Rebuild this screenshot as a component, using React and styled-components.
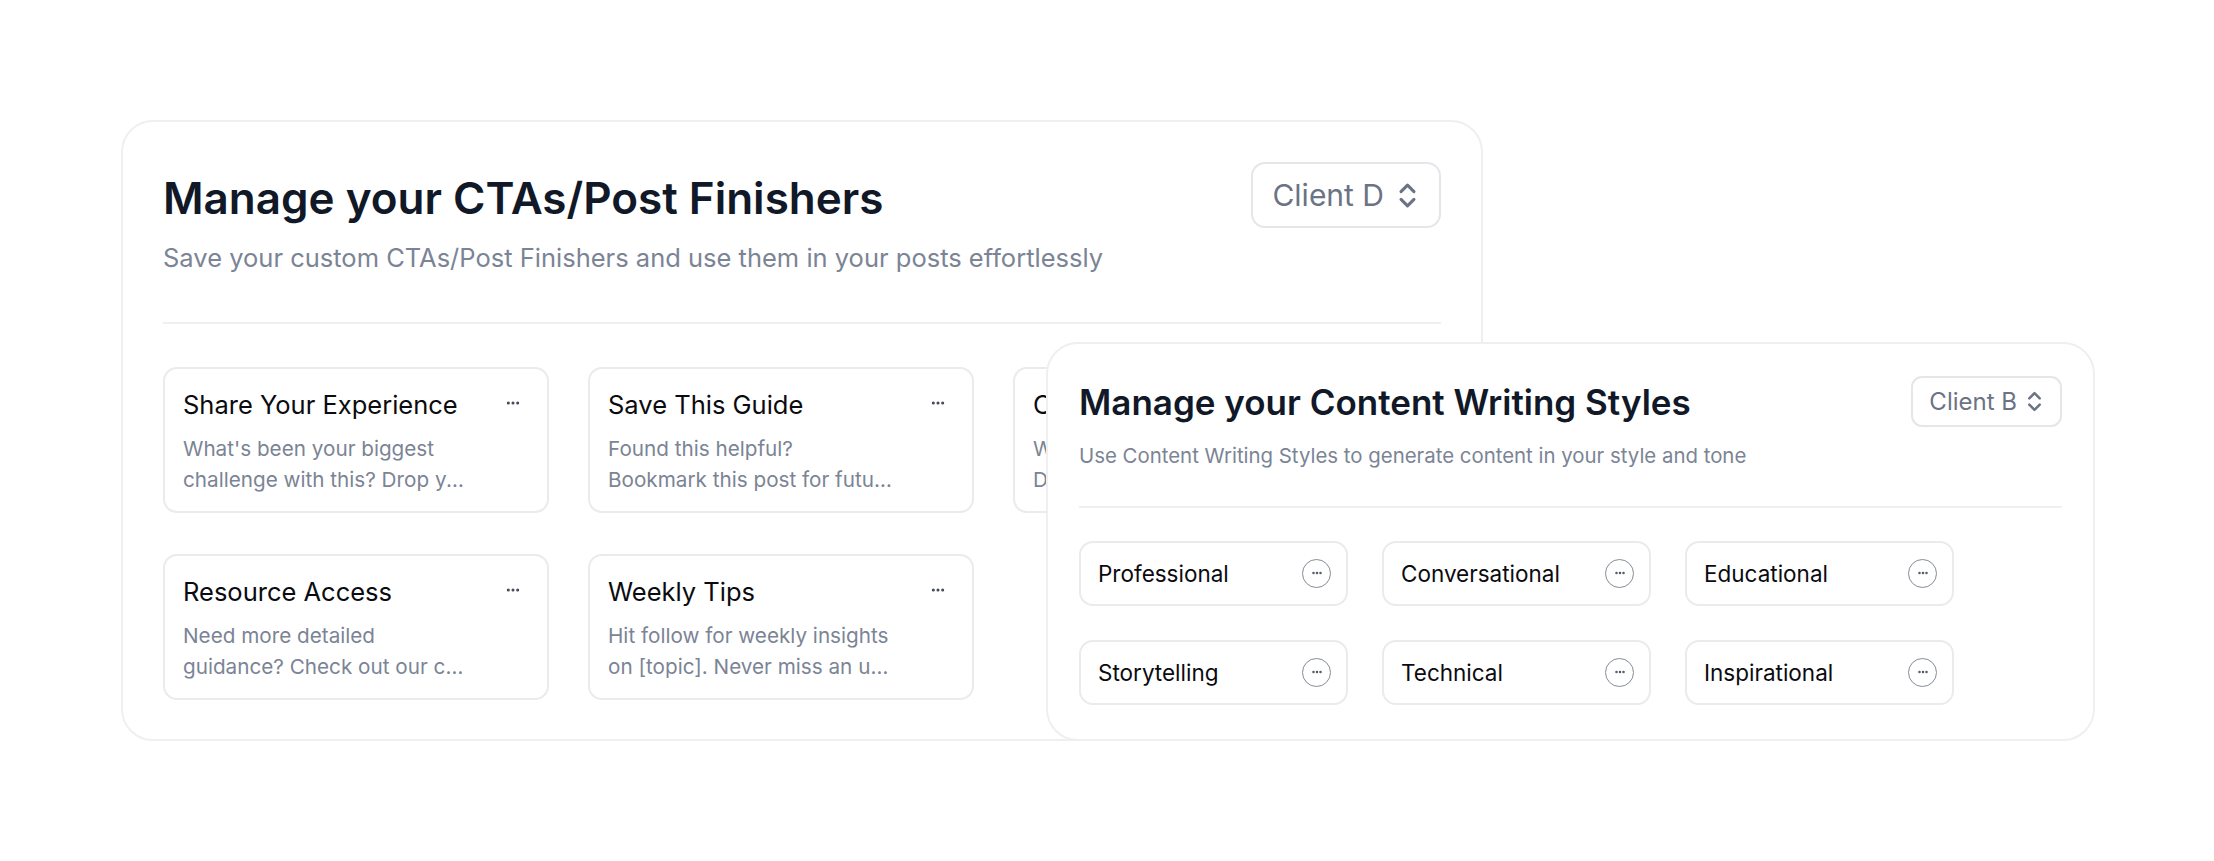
import React from "react"
import styled, { createGlobalStyle } from "styled-components"
import { ChevronsUpDown, Ellipsis } from "lucide-react"

const GlobalStyle = createGlobalStyle`
  html, body {
    margin: 0;
    background: #ffffff;
  }
  body {
    font-family: Inter, "Noto Sans", sans-serif;
    -webkit-font-smoothing: antialiased;
  }
  * {
    box-sizing: border-box;
  }
`

const Stage = styled.div`
  position: relative;
  width: 2214px;
  height: 861px;
  padding: 120px 0 0 121px;
  overflow: hidden;
`

const Panel = styled.section`
  background: #ffffff;
  border: 2px solid #efeff1;
  border-radius: 32px;
`

const CtaPanel = styled(Panel)`
  width: 1362px;
  height: 621px;
  padding: 40px;
`

// second panel sits on top of the first one, overlapping its right side
const StylesPanel = styled(Panel)`
  position: absolute;
  left: 1046px;
  top: 342px;
  width: 1049px;
  height: 399px;
  padding: 32px 31px;
`

const Header = styled.div`
  display: flex;
  justify-content: space-between;
  align-items: flex-start;
`

const Title = styled.h1`
  margin: ${(p) => (p.$big ? "10px" : "5px")} 0 0;
  font-size: ${(p) => (p.$big ? "44px" : "35px")};
  line-height: 1.2;
  font-weight: 600;
  color: #111827;
`

const Subtitle = styled.p`
  margin: ${(p) => (p.$big ? "14px" : "18px")} 0 0;
  font-size: ${(p) => (p.$big ? "25.5px" : "20.4px")};
  line-height: 1.5;
  color: #7b8495;
`

const ClientSelect = styled.button`
  display: flex;
  align-items: center;
  gap: ${(p) => (p.$big ? "8px" : "5px")};
  height: ${(p) => (p.$big ? "66px" : "51px")};
  padding: ${(p) => (p.$big ? "0 16px 0 19px" : "0 13px 0 16px")};
  background: #ffffff;
  border: 2px solid #e4e6ea;
  border-radius: ${(p) => (p.$big ? "14px" : "11px")};
  font-family: inherit;
  font-size: ${(p) => (p.$big ? "30px" : "24px")};
  color: #6b7385;
  cursor: pointer;
`

const Divider = styled.hr`
  margin: ${(p) => (p.$big ? "45px 0 43px" : "34px 0 33px")};
  border: 0;
  border-top: 2px solid #f0f0f2;
`

const CtaGrid = styled.div`
  display: grid;
  grid-template-columns: repeat(3, 386px);
  column-gap: 39px;
  row-gap: 41px;
`

const CtaCard = styled.article`
  display: flex;
  gap: 31px;
  height: 146px;
  padding: 18px;
  border: 2px solid #ebebee;
  border-radius: 14px;
  background: #ffffff;
`

const CtaBody = styled.div`
  flex: 1;
  min-width: 0;
`

const CtaTitle = styled.h3`
  margin: 0;
  font-size: 25.5px;
  line-height: 36px;
  font-weight: 400;
  color: #0b0b0f;
  white-space: nowrap;
`

const CtaText = styled.p`
  margin: 10px 0 0;
  font-size: 20.7px;
  line-height: 31px;
  color: #7b8495;
`

const CtaLine = styled.span`
  display: block;
  white-space: nowrap;
  overflow: hidden;
  text-overflow: ellipsis;
`

const DotsButton = styled.button`
  display: flex;
  justify-content: center;
  flex: 0 0 30px;
  height: 30px;
  padding: 8px 2px 0 0;
  border: 0;
  background: none;
  color: #3f4553;
  cursor: pointer;
`

const StyleGrid = styled.div`
  display: grid;
  grid-template-columns: repeat(3, 269px);
  gap: 34px;
`

const StyleChip = styled.div`
  display: flex;
  align-items: center;
  justify-content: space-between;
  height: 65px;
  padding: 0 15px 0 17px;
  border: 2px solid #ebebee;
  border-radius: 14px;
  font-size: 22.5px;
  color: #0b0b0f;
`

const CircleButton = styled.button`
  display: flex;
  align-items: center;
  justify-content: center;
  width: 29px;
  height: 29px;
  padding: 0;
  border: 1.5px solid #858b97;
  border-radius: 50%;
  background: #ffffff;
  color: #4b5160;
  cursor: pointer;
`

const ctas = [
  {
    title: "Share Your Experience",
    lines: ["What's been your biggest", "challenge with this? Drop your thoughts in the comments below!"],
  },
  {
    title: "Save This Guide",
    lines: ["Found this helpful?", "Bookmark this post for future reference."],
  },
  {
    title: "Connect With Me",
    lines: ["Want more content like this?", "Don't forget to follow for more."],
  },
  {
    title: "Resource Access",
    lines: ["Need more detailed", "guidance? Check out our complete resource library."],
  },
  {
    title: "Weekly Tips",
    lines: ["Hit follow for weekly insights", "on [topic]. Never miss an update!"],
  },
]

const writingStyles = [
  "Professional",
  "Conversational",
  "Educational",
  "Storytelling",
  "Technical",
  "Inspirational",
]

export default function App() {
  return (
    <>
      <GlobalStyle />
      <Stage>
        <CtaPanel>
          <Header>
            <div>
              <Title $big>Manage your CTAs/Post Finishers</Title>
              <Subtitle $big>
                Save your custom CTAs/Post Finishers and use them in your posts effortlessly
              </Subtitle>
            </div>
            <ClientSelect $big>
              Client D
              <ChevronsUpDown size={31} strokeWidth={2.4} />
            </ClientSelect>
          </Header>
          <Divider $big />
          <CtaGrid>
            {ctas.map((cta) => (
              <CtaCard key={cta.title}>
                <CtaBody>
                  <CtaTitle>{cta.title}</CtaTitle>
                  <CtaText>
                    {cta.lines.map((line) => (
                      <CtaLine key={line}>{line}</CtaLine>
                    ))}
                  </CtaText>
                </CtaBody>
                <DotsButton aria-label="More options">
                  <Ellipsis size={16} strokeWidth={2.6} />
                </DotsButton>
              </CtaCard>
            ))}
          </CtaGrid>
        </CtaPanel>

        <StylesPanel>
          <Header>
            <div>
              <Title>Manage your Content Writing Styles</Title>
              <Subtitle>Use Content Writing Styles to generate content in your style and tone</Subtitle>
            </div>
            <ClientSelect>
              Client B
              <ChevronsUpDown size={25} strokeWidth={2.4} />
            </ClientSelect>
          </Header>
          <Divider />
          <StyleGrid>
            {writingStyles.map((name) => (
              <StyleChip key={name}>
                {name}
                <CircleButton aria-label="More options">
                  <Ellipsis size={12} strokeWidth={3} />
                </CircleButton>
              </StyleChip>
            ))}
          </StyleGrid>
        </StylesPanel>
      </Stage>
    </>
  )
}
